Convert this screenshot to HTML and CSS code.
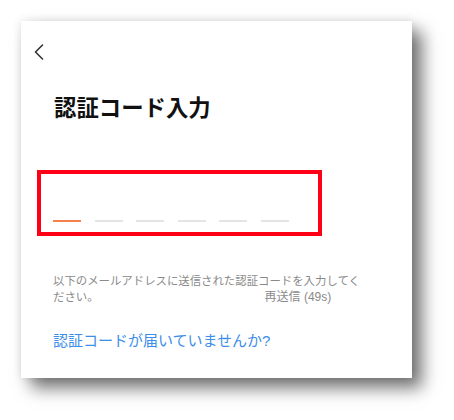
FILE: index.html
```html
<!DOCTYPE html>
<html lang="ja">
<head>
<meta charset="utf-8">
<link rel="stylesheet" href="styles.css">
</head>
<body>
<div class="card">
  <div class="nav">
    <svg class="back" width="10" height="16" viewBox="0 0 10 16"><polyline points="8.5,1 1.5,8 8.5,15" fill="none" stroke="#333" stroke-width="1.6" stroke-linecap="round" stroke-linejoin="round"/></svg>
  </div>
  <h1 class="title">認証コード入力</h1>
  <div class="code-box">
    <div class="code">
      <span class="slot active"></span>
      <span class="slot"></span>
      <span class="slot"></span>
      <span class="slot"></span>
      <span class="slot"></span>
      <span class="slot"></span>
    </div>
  </div>
  <p class="desc">以下のメールアドレスに送信された認証コードを入力してく<br>ださい。<span class="resend">再送信 (49s)</span></p>
  <a class="help">認証コードが届いていませんか?</a>
</div>
</body>
</html>
```
FILE: styles.css
```css
html, body {
  margin: 0;
  padding: 0;
  background: #ffffff;
}
body {
  font-family: "Liberation Sans", "Noto Sans CJK JP", sans-serif;
  width: 454px;
  height: 420px;
  overflow: hidden;
}
.card {
  margin: 21px 0 0 21px;
  width: 391px;
  height: 357px;
  box-sizing: border-box;
  background: #fff;
  padding: 23px 0 0 32px;
  box-shadow: 10px 10px 16px rgba(0,0,0,0.55), 0 0 9px rgba(0,0,0,0.10);
}
.nav {
  height: 16px;
  margin-left: -19px;
  display: flex;
}
.back {
  display: block;
}
.title {
  margin: 38px 0 0 1px;
  font-size: 22.4px;
  line-height: 22px;
  font-weight: 700;
  color: #111;
  letter-spacing: 0;
}
.code-box {
  margin: 50px 0 0 -16px;
  width: 285px;
  height: 66px;
  box-sizing: border-box;
  border: 4px solid #ff0016;
  padding: 0 0 10px 12px;
  display: flex;
  align-items: flex-end;
}
.code {
  display: flex;
  gap: 13.6px;
}
.slot {
  display: block;
  width: 28px;
  height: 2px;
  background: #e4e4e4;
}
.slot.active {
  background: #f5824c;
}
.desc {
  margin: 37px 0 0 0;
  font-size: 11.4px;
  line-height: 16px;
  color: #8a8a8a;
}
.resend {
  margin-left: 166px;
  font-size: 12px;
}
.help {
  display: block;
  margin-top: 28px;
  font-size: 15px;
  line-height: 15px;
  color: #3d8ee8;
}
```
